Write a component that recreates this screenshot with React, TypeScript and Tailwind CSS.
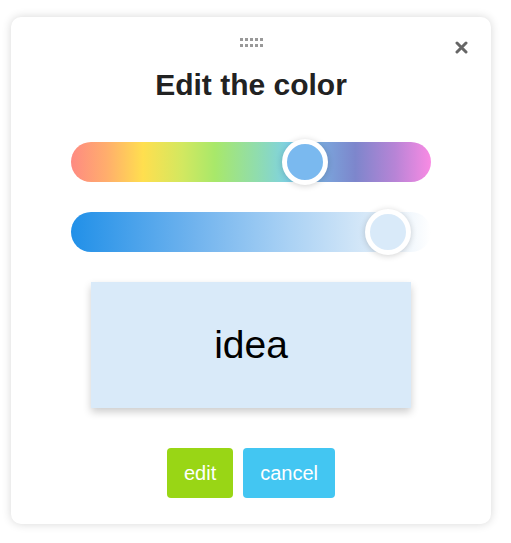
import React, { useState } from 'react';

const hueGradient =
  'linear-gradient(to right, #fe8a82 0%, #ffae6c 10%, #ffdf4f 20%, #d2e860 31%, #a8e86a 40%, #8fdcb0 52%, #7dd0e8 61%, #7aa6dc 70%, #7d86cc 79%, #b784d6 90%, #f98be4 100%)';
const shadeGradient =
  'linear-gradient(to right, #2190e8 0%, #72b4ee 35%, #a9d1f4 60%, #d6e8f8 82%, rgba(255,255,255,0) 100%)';

const Slider: React.FC<{ background: string; value: number; thumb: string }> = ({ background, value, thumb }) => {
  return <div className="relative h-[40px] w-[360px] rounded-full" style={{ background }}>
      <div className="absolute top-1/2 w-[46px] h-[46px] -translate-x-1/2 -translate-y-1/2 rounded-full border-[5px] border-white shadow-[0_1px_6px_rgba(0,0,0,0.18)]" style={{ left: `${value}%`, background: thumb }} />
    </div>;
};

const App: React.FC = () => {
  const [hue] = useState(65);
  const [shade] = useState(88);
  return <div className="min-h-screen bg-white pt-[17px] pl-[11px]" style={{ fontFamily: '"Liberation Sans", Arial, sans-serif' }}>
      <div className="relative w-[480px] h-[507px] bg-white rounded-[10px] shadow-[0_0_10px_rgba(0,0,0,0.16)] flex flex-col items-center pt-[21px]">
        <div className="grid grid-cols-5 gap-x-[2px] gap-y-[3px]">
          {Array.from({ length: 10 }).map((_, i) => <div key={i} className="w-[3px] h-[3px] bg-[#999]" />)}
        </div>
        <button className="absolute top-[24px] right-[23px] w-[13px] h-[13px] text-[#666]">
          <svg viewBox="0 0 13 13" width="13" height="13">
            <path d="M2 2 L11 11 M11 2 L2 11" stroke="currentColor" strokeWidth="3" strokeLinecap="round" />
          </svg>
        </button>
        <h2 className="mt-[20px] text-[30px] leading-[36px] font-bold text-[#222]">Edit the color</h2>
        <div className="mt-[39px]">
          <Slider background={hueGradient} value={hue} thumb="#7ab9ef" />
        </div>
        <div className="mt-[30px]">
          <Slider background={shadeGradient} value={shade} thumb="#d9eaf9" />
        </div>
        <div className="mt-[30px] w-[320px] h-[126px] bg-[#d9eaf9] flex items-center justify-center shadow-[0_4px_8px_rgba(0,0,0,0.2)]">
          <span className="text-[39px] text-black">idea</span>
        </div>
        <div className="mt-[40px] flex gap-[10px]">
          <button className="h-[50px] px-[17px] rounded-[4px] bg-[#99d615] text-white text-[20px]">edit</button>
          <button className="h-[50px] px-[17px] rounded-[4px] bg-[#43c6f2] text-white text-[20px]">cancel</button>
        </div>
      </div>
    </div>;
};

export default App;
